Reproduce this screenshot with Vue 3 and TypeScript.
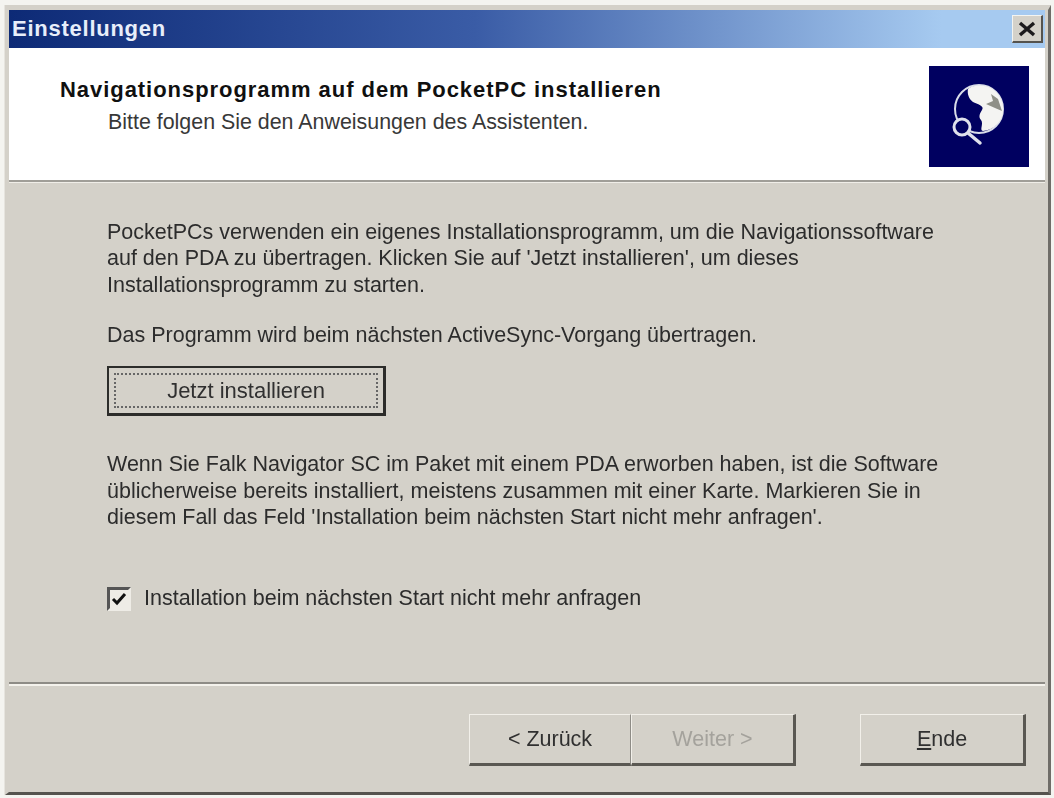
<script setup lang="ts">
const paragraphOne: string[] = [
  'PocketPCs verwenden ein eigenes Installationsprogramm, um die Navigationssoftware',
  "auf den PDA zu übertragen. Klicken Sie auf 'Jetzt installieren', um dieses",
  'Installationsprogramm zu starten.',
]
const paragraphTwo: string[] = [
  'Wenn Sie Falk Navigator SC im Paket mit einem PDA erworben haben, ist die Software',
  'üblicherweise bereits installiert, meistens zusammen mit einer Karte. Markieren Sie in',
  "diesem Fall das Feld 'Installation beim nächsten Start nicht mehr anfragen'.",
]
</script>

<template>
  <div class="page">
    <div class="window">
      <div class="titlebar">
        <span class="title">Einstellungen</span>
        <button class="close" aria-label="Schließen">
          <svg width="20" height="16" viewBox="0 0 20 16">
            <path d="M3 2 L17 14 M17 2 L3 14" stroke="#1c1a1c" stroke-width="3.4" fill="none" />
          </svg>
        </button>
      </div>

      <header class="header">
        <div class="header-text">
          <h1>Navigationsprogramm auf dem PocketPC installieren</h1>
          <p>Bitte folgen Sie den Anweisungen des Assistenten.</p>
        </div>
        <div class="logo">
          <svg width="100" height="101" viewBox="0 0 100 101">
            <circle cx="50" cy="43" r="24" fill="#000060" stroke="#d8dce8" stroke-width="2" />
            <path d="M39 23 C44 18 58 18 66 25 C72 31 75 38 74 46 C73 55 65 64 54 65 C50 64 55 58 52 54 C49 51 51 47 53 44 C56 40 48 38 44 36 C40 33 38 28 39 23 Z" fill="#f4f4f2" />
            <path d="M62 28 L69 33 L73 45 L66 42 L57 38 L64 35 Z" fill="#8f9088" />
            <circle cx="33" cy="61" r="8" fill="#000060" stroke="#dfe1ec" stroke-width="3" />
            <path d="M39 67 L51 77" stroke="#dfe1ec" stroke-width="3.5" stroke-linecap="round" />
          </svg>
        </div>
      </header>

      <main class="body">
        <p class="para">
          <span v-for="line in paragraphOne" :key="line" class="line">{{ line }}</span>
        </p>
        <p class="single">Das Programm wird beim nächsten ActiveSync-Vorgang übertragen.</p>
        <button class="install"><span class="focus">Jetzt installieren</span></button>
        <p class="para second">
          <span v-for="line in paragraphTwo" :key="line" class="line">{{ line }}</span>
        </p>
        <label class="check">
          <span class="box">
            <svg width="16" height="14" viewBox="0 0 16 14">
              <path d="M2 7 L6 11 L14 2" stroke="#111" stroke-width="3" fill="none" />
            </svg>
          </span>
          <span>Installation beim nächsten Start nicht mehr anfragen</span>
        </label>
      </main>

      <footer class="footer">
        <div class="group">
          <button class="btn back">&lt; Zurück</button>
          <button class="btn next">Weiter &gt;</button>
        </div>
        <button class="btn end"><span class="u">E</span>nde</button>
      </footer>
    </div>
  </div>
</template>

<style>
html, body { margin: 0; background: #f4f4f0; }
</style>

<style scoped>
.page {
  width: 1054px;
  height: 798px;
  padding: 5px 3px 3px 5px;
  box-sizing: border-box;
  font-family: "Liberation Sans", Arial, sans-serif;
  color: #2c2c2c;
  overflow: hidden;
  filter: blur(0.6px);
}
.window {
  height: 100%;
  box-sizing: border-box;
  background: #d4d1c9;
  border: 4px solid #d4d1c9;
  border-top-width: 5px;
  border-bottom: 3px solid #55534e;
  border-right: 3px solid #6f6d68;
  padding-right: 3px;
  display: flex;
  flex-direction: column;
  box-shadow: -1px 0 0 #e6e4de;
}
.titlebar {
  height: 38px;
  flex: none;
  background: linear-gradient(90deg, #0d2a76 0%, #3a5ca6 45%, #a6caf0 90%);
  display: flex;
  align-items: center;
  justify-content: space-between;
  padding: 0 2px 0 3px;
}
.title {
  color: #e8eefa;
  font-weight: 700;
  font-size: 22px;
  letter-spacing: 0.75px;
}
.close {
  width: 31px;
  height: 28px;
  padding: 0;
  display: flex;
  align-items: center;
  justify-content: center;
  background: #d4d1c9;
  border: 1px solid;
  border-width: 1px 2px 2px 1px;
  border-color: #f4f4f0 #55534e #55534e #f4f4f0;
}
.header {
  height: 132px;
  flex: none;
  background: #fff;
  display: flex;
  justify-content: space-between;
  padding: 18px 12px 0 51px;
  box-sizing: border-box;
  border-right: 4px solid #fff;
}
.header h1 {
  margin: 11px 0 0;
  color: #101010;
  font-size: 22px;
  line-height: 26px;
  font-weight: 700;
  letter-spacing: 0.95px;
}
.header p {
  margin: 6px 0 0 48px;
  font-size: 21.4px;
  line-height: 26px;
  color: #383838;
}
.logo {
  width: 100px;
  height: 101px;
  background: #000060;
}
.body {
  flex: 1;
  border-top: 2px solid #a09e98;
  box-shadow: inset 0 1px 0 #f0eee8;
  padding: 37px 0 0 98px;
  min-height: 0;
  font-size: 21.5px;
}
.para { margin: 0; line-height: 26.4px; }
.line { display: block; white-space: nowrap; }
.single { margin: 24px 0 0; line-height: 26px; }
.install {
  display: block;
  margin: 18px 0 0;
  width: 279px;
  height: 50px;
  padding: 5px;
  box-sizing: border-box;
  background: #d4d1c9;
  border: 2px solid #2c2c2a;
  border-bottom-width: 3px;
  border-right-width: 3px;
  font: inherit;
  font-size: 22px;
  color: #303030;
}
.focus {
  display: flex;
  align-items: center;
  justify-content: center;
  height: 100%;
  border: 2px dotted #666;
  box-sizing: border-box;
}
.second { margin-top: 35px; }
.check {
  display: flex;
  align-items: center;
  gap: 13px;
  margin-top: 56px;
}
.box {
  width: 24px;
  height: 24px;
  box-sizing: border-box;
  background: #eeece6;
  border: 3px solid;
  border-color: #555 #eeece6 #eeece6 #555;
  display: flex;
  align-items: center;
  justify-content: center;
}
.footer {
  height: 110px;
  flex: none;
  box-sizing: border-box;
  border-top: 2px solid #8e8c86;
  box-shadow: inset 0 2px 0 #f4f2ec;
  display: flex;
  justify-content: flex-end;
  gap: 64px;
  padding: 30px 19px 0 0;
}
.group { display: flex; }
.btn {
  height: 52px;
  box-sizing: border-box;
  background: #d4d1c9;
  border-style: solid;
  border-width: 1px 3px 3px 1px;
  border-color: #f2f0ea #5a5852 #5a5852 #f2f0ea;
  font: inherit;
  font-size: 21.5px;
  color: #303030;
  padding: 0;
}
.back { width: 162px; border-right-width: 1px; border-right-color: #8e8c86; }
.next { width: 165px; color: #a4a29c; }
.end { width: 166px; }
.u { text-decoration: underline; }
</style>
